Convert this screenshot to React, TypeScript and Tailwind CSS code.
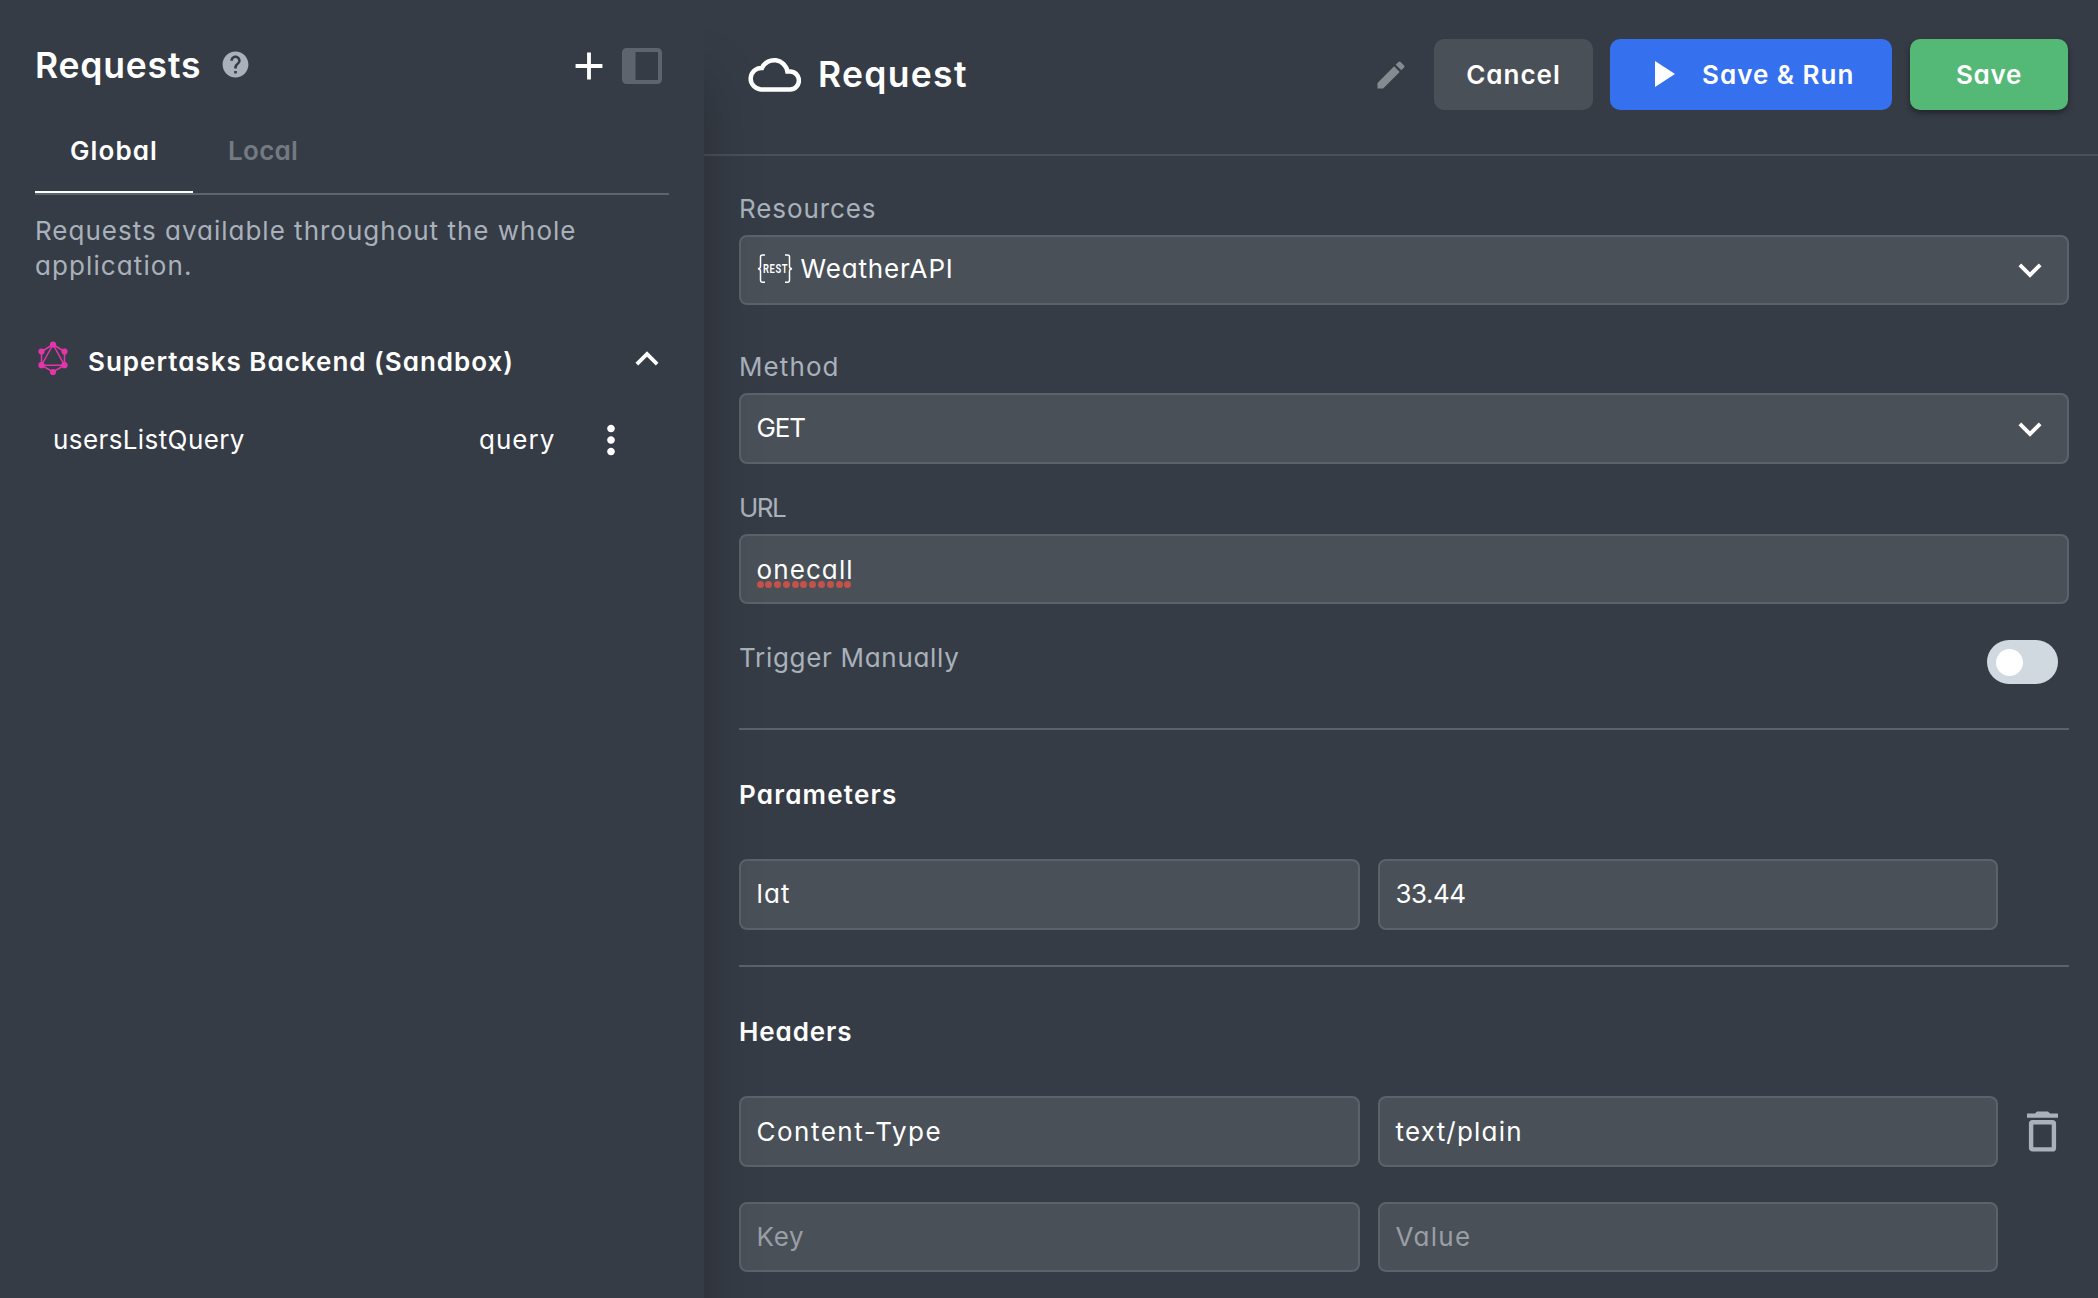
import type { ReactNode } from "react";
import { MdAdd, MdEdit, MdHelp, MdKeyboardArrowDown, MdKeyboardArrowUp, MdMoreVert } from "react-icons/md";

function PanelIcon() {
  return (
    <svg width="40" height="36" viewBox="0 0 40 36" fill="none">
      <rect x="2" y="2" width="36" height="32" rx="2.5" stroke="#5d646d" strokeWidth="4" />
      <rect x="2" y="2" width="11.5" height="32" fill="#5d646d" />
    </svg>
  );
}

function GraphqlIcon() {
  const nodes = [[15, 3.5], [3.5, 10.5], [26.5, 10.5], [3.5, 24.2], [26.5, 24.2], [15, 31]];
  return (
    <svg width="30" height="35" viewBox="0 0 30 35" fill="none" stroke="#e535ab" strokeWidth="1.5">
      <path d="M15 3.5 26.5 10.5V24.2L15 31 3.5 24.2V10.5ZM15 3.5 3.5 24.2H26.5Z" />
      {nodes.map(([x, y]) => (
        <circle key={`${x}-${y}`} cx={x} cy={y} r="3.1" fill="#e535ab" stroke="none" />
      ))}
    </svg>
  );
}

function CloudIcon() {
  return (
    <svg width="53" height="36" viewBox="0 0 53 36" fill="none" stroke="#fff" strokeWidth="4.5">
      <path d="M12.9 33.4A10.75 10.75 0 1 1 14 11.9A13.4 13.4 0 0 1 39.4 15.6L42 15.6A8.9 8.9 0 0 1 42 33.4Z" />
    </svg>
  );
}

function RestIcon() {
  return (
    <svg width="36" height="30" viewBox="0 0 36 30" fill="none" stroke="#fff" strokeWidth="1.5">
      <path d="M8 1H5.5Q3.5 1 3.5 3V12.5Q3.5 14.5 1 14.8Q3.5 15.2 3.5 17V26Q3.5 28.3 5.5 28.3H8M28 1H30.5Q32.5 1 32.5 3V12.5Q32.5 14.5 35 14.8Q32.5 15.2 32.5 17V26Q32.5 28.3 30.5 28.3H28" />
      <text transform="translate(6 19.2) scale(0.78 1)" fill="#fff" stroke="none" fontFamily="Roboto, sans-serif" fontWeight="600" fontSize="12" letterSpacing="0.8">
        REST
      </text>
    </svg>
  );
}

function TrashIcon() {
  return (
    <svg width="31" height="41" viewBox="0 0 31 41" fill="none">
      <path d="M0 2.5H8L10 .5H21L23 2.5H31V6.8H0Z" fill="#a9b1bb" />
      <rect x="4.1" y="11.2" width="22.8" height="27.2" rx="1.5" stroke="#a9b1bb" strokeWidth="4.4" />
    </svg>
  );
}

function Field({ children, className = "h-[71px]" }: { children: ReactNode; className?: string }) {
  return (
    <div className={`flex items-center rounded-lg border-2 border-[#5b626b] bg-[#4a5058] pr-4 pl-[15.5px] ${className}`}>
      {children}
    </div>
  );
}

function Divider() {
  return <div className="h-0.5 bg-[#5b626b]" />;
}

const heading = "flex h-[129px] items-center font-semibold";
const label = "leading-[35px] text-[#a9b1bb]";

export default function App() {
  return (
    <div className="flex h-[1298px] w-[2098px] overflow-hidden bg-[#363c46] font-[Inter,sans-serif] text-[26px] text-white [font-feature-settings:'cv11']">
      <aside className="relative z-10 w-[704px] shrink-0 bg-[#363c46] px-[35px] shadow-[0_80px_52px_rgba(0,0,0,0.25)]">
        <div className="flex h-[131px] items-center">
          <h1 className="w-[185px] pt-px text-[35.5px] font-semibold tracking-[0.8px]">Requests</h1>
          <MdHelp className="-mt-[3px] size-[31px] text-[#a9b1bb]" />
          <MdAdd className="ml-auto size-[46px]" />
          <div className="mr-[7px] ml-[10px]">
            <PanelIcon />
          </div>
        </div>

        <div className="flex h-[64px] w-[634px] border-b-2 border-[#5d646d] font-semibold leading-10">
          <div className="w-[158px] border-b-2 border-white pl-[35px] tracking-[1.1px]">Global</div>
          <div className="pl-[35px] tracking-[0.3px] text-[#747a82]">Local</div>
        </div>

        <p className="mt-[18px] leading-[35px] tracking-[1px] text-[#a9b1bb]">
          Requests available throughout the whole
          <br />
          <span className="tracking-[1.1px]">application.</span>
        </p>

        <div className="mt-[51px] flex h-14 items-center">
          <div className="-mt-2 ml-[3px] w-[50px]">
            <GraphqlIcon />
          </div>
          <span className="-mt-0.5 font-semibold tracking-[1px]">Supertasks Backend (Sandbox)</span>
          <MdKeyboardArrowUp className="-mr-px -mt-1.5 ml-auto size-[46px]" />
        </div>

        <div className="flex h-[100px] items-center pl-[18px]">
          <span className="-mt-0.5 w-[426px] tracking-[0.4px]">usersListQuery</span>
          <span className="-mt-0.5 w-[109px] tracking-[1px]">query</span>
          <MdMoreVert className="size-[46px]" />
        </div>
      </aside>

      <main className="min-w-0 flex-1">
        <header className="h-[156px] border-b-2 border-[#4a5058] pt-[39px] pr-[30px] pl-11">
          <div className="flex h-[71px] items-center">
            <div className="-mt-[2px]">
              <CloudIcon />
            </div>
            <h2 className="ml-[17px] text-[35.5px] font-semibold tracking-[1.3px]">Request</h2>
            <MdEdit className="mr-[25px] ml-auto size-9 text-[#868a91]" />
            <button className="mr-[17px] h-full w-[159px] rounded-[10px] bg-[#4a5058] font-semibold tracking-[1px]">Cancel</button>
            <button className="mr-[18px] flex h-full w-[282px] items-center rounded-[10px] bg-[#3571ee] pl-[45px] font-semibold tracking-[1px]">
              <svg width="20" height="26" viewBox="0 0 20 26" className="-mt-px mr-[27px]">
                <path d="M0 0 20 13 0 26Z" fill="#fff" />
              </svg>
              Save &amp; Run
            </button>
            <button className="h-full w-[158px] rounded-[10px] bg-[#54b876] font-semibold tracking-[0.7px] shadow-[0_3px_6px_rgba(0,0,0,0.4)]">Save</button>
          </div>
        </header>

        <div className="pr-[29px] pl-[35px]">
          <div className={`h-[79px] pt-[35px] tracking-[0.9px] ${label}`}>Resources</div>
          <Field className="h-[70px]">
            <div className="-mt-[3px]">
              <RestIcon />
            </div>
            <span className="-mt-[3px] ml-2 tracking-[0.85px]">WeatherAPI</span>
            <MdKeyboardArrowDown className="-mr-0.5 ml-auto size-[46px]" />
          </Field>

          <div className={`h-[88px] pt-11 tracking-[1.1px] ${label}`}>Method</div>
          <Field>
            <span className="-mt-0.5 tracking-[-1.1px]">GET</span>
            <MdKeyboardArrowDown className="-mr-0.5 ml-auto size-[46px]" />
          </Field>

          <div className={`h-[70px] pt-[26px] tracking-[-1.6px] ${label}`}>URL</div>
          <Field className="h-[70px]">
            <div className="relative tracking-[1.1px]">
              onecall
              <div className="absolute top-[31px] left-0 flex w-[95px] justify-between">
                {Array.from({ length: 11 }, (_, i) => (
                  <span key={i} className="size-[7px] rounded-full bg-[#c4524a]" />
                ))}
              </div>
            </div>
          </Field>

          <div className="flex h-[124px] items-start justify-between pt-9 pr-[11px]">
            <span className={`tracking-[0.7px] ${label}`}>Trigger Manually</span>
            <div className="flex h-11 w-[71px] items-center rounded-full bg-[#d1d9e0] pl-[9px]">
              <div className="size-[27px] rounded-full bg-white" />
            </div>
          </div>
          <Divider />

          <div className={`tracking-[1.2px] ${heading}`}>Parameters</div>
          <div className="mb-[35px] flex gap-[18px]">
            <Field className="h-[71px] w-[621px] pb-0.5 tracking-[1.1px]">lat</Field>
            <Field className="h-[71px] w-[620px] pb-0.5 tracking-[-0.5px]">33.44</Field>
          </div>
          <Divider />

          <div className={`tracking-[0.9px] ${heading}`}>Headers</div>
          <div className="flex items-center gap-[18px]">
            <Field className="h-[71px] w-[621px] tracking-[1.5px]">Content-Type</Field>
            <Field className="h-[71px] w-[620px] tracking-[1.2px]">text/plain</Field>
            <div className="ml-[11px]">
              <TrashIcon />
            </div>
          </div>
          <div className="mt-[35px] flex gap-[18px] text-[#9a9ea5]">
            <Field className="h-[70px] w-[621px] pb-0.5 tracking-[0.7px]">Key</Field>
            <Field className="h-[70px] w-[620px] pb-0.5 tracking-[1.3px]">Value</Field>
          </div>
        </div>
      </main>
    </div>
  );
}
